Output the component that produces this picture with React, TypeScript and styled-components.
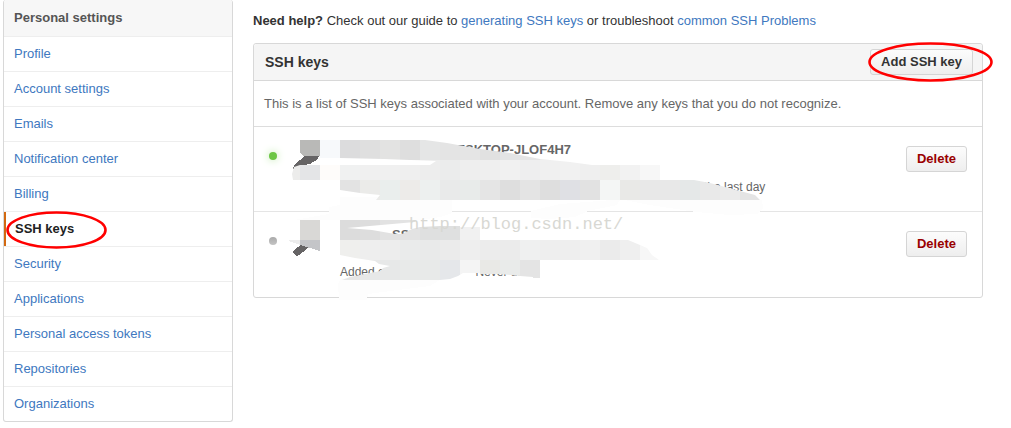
import React from "react";
import styled, { createGlobalStyle } from "styled-components";

const GlobalStyle = createGlobalStyle`
  *, *::before, *::after { box-sizing: border-box; }
  body {
    margin: 0;
    background: #fff;
    color: #333;
    font: 13px/20px "Liberation Sans", Arial, sans-serif;
  }
  a { color: #4078c0; text-decoration: none; }
`;

const Page = styled.div`
  display: flex;
  align-items: flex-start;
  gap: 20px;
  padding: 0 28px 6px 3px;
`;

const Sidebar = styled.nav`
  flex: 0 0 230px;
  border: 1px solid #d8d8d8;
  border-top: 0;
  border-radius: 3px;
`;

const SidebarTitle = styled.h2`
  margin: 0;
  padding: 8px 10px;
  font-size: 13px;
  line-height: 20px;
  color: #555;
  background: #f7f7f7;
  border-bottom: 1px solid #eee;
  border-radius: 3px 3px 0 0;
`;

const NavItem = styled.a<{ $active?: boolean }>`
  position: relative;
  display: block;
  padding: 7px 10px;
  border-bottom: 1px solid #eee;
  &:last-child { border-bottom: 0; }
  ${(p) =>
    p.$active &&
    `
    color: #222;
    font-weight: bold;
    padding-left: 11px;
    box-shadow: inset 2px 0 0 #d26911;
  `}
`;

const Main = styled.main`
  flex: 1;
  min-width: 0;
`;

const Help = styled.p`
  margin: 11px 0 12px;
`;

const Panel = styled.section`
  position: relative;
  border: 1px solid #d8d8d8;
  border-radius: 3px;
`;

const PanelHeader = styled.header`
  display: flex;
  align-items: center;
  justify-content: space-between;
  padding: 5px 9px 5px 11px;
  background: #f5f5f5;
  border-bottom: 1px solid #d8d8d8;
  border-radius: 3px 3px 0 0;
`;

const PanelTitle = styled.h3`
  margin: 0;
  font-size: 14px;
  line-height: 20px;
`;

const Description = styled.p`
  margin: 0;
  padding: 13px 10px 12px;
  color: #666;
  border-bottom: 1px solid #ddd;
`;

const Button = styled.button<{ $danger?: boolean }>`
  height: 26px;
  padding: 0 10px;
  font: bold 13px/20px "Liberation Sans", Arial, sans-serif;
  color: ${(p) => (p.$danger ? "#900" : "#333")};
  background: linear-gradient(#fcfcfc, #eee);
  border: 1px solid #d5d5d5;
  border-radius: 3px;
`;

const ButtonMark = styled.div`
  position: relative;
  display: flex;
`;

const KeyList = styled.ul`
  margin: 0;
  padding: 0;
  list-style: none;
`;

const KeyRow = styled.li`
  display: flex;
  align-items: flex-start;
  min-height: 85px;
  padding: 0 15px;
  border-bottom: 1px solid #e5e5e5;
  &:last-child { border-bottom: 0; }
  ${Button} { margin-top: 19px; }
`;

const Status = styled.span<{ $on?: boolean }>`
  width: 8px;
  height: 8px;
  margin: 25px 63px 0 0;
  border-radius: 50%;
  background: ${(p) => (p.$on ? "#6cc644" : "linear-gradient(#aaa, #c4c4c4)")};
  box-shadow: ${(p) => (p.$on ? "0 0 8px #b8e6a4" : "none")};
`;

const KeyText = styled.div`
  flex: 1;
  display: flex;
  flex-direction: column;
  gap: 17px;
  padding-top: 13px;
  color: #666;
`;

const KeyName = styled.strong<{ $indent: number }>`
  padding-left: ${(p) => p.$indent}px;
`;

const KeyMeta = styled.span<{ $indent: number; $gap: number }>`
  display: flex;
  gap: ${(p) => p.$gap}px;
  padding-left: ${(p) => p.$indent}px;
  font-size: 12px;
`;

const Smudges = styled.svg`
  position: absolute;
  top: 0;
  left: 0;
  pointer-events: none;
`;

const Watermark = styled.span`
  position: absolute;
  top: 171px;
  left: 155px;
  font: 17px/20px "Liberation Mono", monospace;
  color: #d8d8d3;
  pointer-events: none;
`;

const Ring = styled.svg<{ $top: number; $left: number }>`
  position: absolute;
  z-index: 1;
  top: ${(p) => p.$top}px;
  left: ${(p) => p.$left}px;
  pointer-events: none;
`;

function RedRing({ w, h, top, left }: { w: number; h: number; top: number; left: number }) {
  return (
    <Ring $top={top} $left={left} width={w} height={h} aria-hidden="true">
      <ellipse cx={w / 2} cy={h / 2} rx={w / 2 - 1.5} ry={h / 2 - 1.5} fill="none" stroke="#f00" strokeWidth="2.6" />
    </Ring>
  );
}

const links = [
  "Profile", "Account settings", "Emails", "Notification center", "Billing", "SSH keys",
  "Security", "Applications", "Personal access tokens", "Repositories", "Organizations",
];

type Band = { x: number; y: number; h: number; colors: string[] };

const firstBands: Band[] = [
  { x: 340, y: 140, h: 20, colors: ["#dcdcdd", "#dfdfdf", "#e3e3e2", "#dedede", "#e5e6e6", "#e4e4e4", "#e5e5e5", "#e1e1e1", "#e3e4e5", "#e5e5e5", "#ebebeb", "#eeeeee", "#eeeeee"] },
  { x: 280, y: 160, h: 20, colors: ["#ececeb", "#e4e5e7", "#fefcfa", "#f0f1f1", "#f0f0f0", "#f0f0f0", "#efefef", "#ededed", "#ebecec", "#eeeeee", "#efefef", "#f1f1f1", "#eeeeef", "#f0f0f0", "#f1f1f1", "#efefef", "#eeeeec", "#f2f2f2", "#f7f7f7"] },
  { x: 340, y: 180, h: 20, colors: ["#e3e3e3", "#ebebe9", "#eaeeed", "#edebe9", "#edf0ef", "#e9eaea", "#e8ebea", "#e5e5e5", "#dedede", "#e4e4e4", "#dedede", "#dfe0e4", "#e2e2e2", "#f4f6f5", "#e9e9e7", "#e8e8e8", "#e8e8e8", "#e5e8e8", "#e9e9e9", "#ebebeb", "#e4e4e4", "#e6e6e6"] },
];

const secondBands: Band[] = [
  { x: 340, y: 220, h: 20, colors: ["#dcdcdc", "#dddddd", "#e2e2e2", "#e3e3e3", "#dfe0e0", "#dfe0e0", "#f3f3f3", "#f3f3f3"] },
  { x: 340, y: 240, h: 20, colors: ["#efefed", "#eeeeee", "#ededed", "#eaebeb", "#e9eaea", "#ebebeb", "#eeeeee", "#ececec", "#ebebeb", "#eff0f0", "#eeeeee", "#eeeeee", "#f0f0f0", "#ebebeb", "#efefef", "#f7f7f7"] },
  { x: 340, y: 260, h: 20, colors: ["#e6e6e6", "#e7e8e8", "#e7e8e8", "#e8eae9", "#e8eae9", "#e5e7ea", "#f4f4f4", "#e9e9e6", "#e9ebea", "#e4e4e4"] },
];

function Bands({ bands }: { bands: Band[] }) {
  return (
    <>
      {bands.map((b) =>
        b.colors.map((c, i) => (
          <rect key={`${b.x}-${b.y}-${i}`} x={b.x + i * 20} y={b.y} width="20" height={b.h} fill={c} />
        ))
      )}
    </>
  );
}

function Redactions() {
  return (
    <Smudges width="560" height="260" viewBox="254 44 560 260" shapeRendering="crispEdges" aria-hidden="true">
      <defs>
        <clipPath id="first">
          <path d="M340 140H425L447 143L480 149L510 153L540 159L570 162L592 165H660V180H694L710 183L740 191L755 195L760 200H376L380 195L360 193L340 190V180H293L292 174L294 167L300 165H430L436 161L384 159L340 158Z" />
        </clipPath>
        <clipPath id="second">
          <path d="M340 220H415V222L347 228L372 230L395 234H402L412 229L420 227L440 226H460V240H628L640 245L647 248L652 255L659 260H540V278H533V277L520 276L500 274H480V273H463L458 276L450 279L440 280H342L350 277L365 274L380 271L383 268L390 266L379 264L375 261L355 258L340 255Z" />
        </clipPath>
      </defs>
      <path fill="#fdfdfd" d="M340 197H452V213L440 217L420 220H294L329 214V207L340 205Z" />
      <path fill="#fdfdfd" d="M531 211L560 204L612 200H620L617 205L588 211L575 217L550 219L531 218Z" />
      <path fill="#fdfdfd" d="M624 200H762L763 208L757 214L730 215L696 212L650 205Z" />
      <path fill="#fdfdfd" d="M338 284L341 278L440 280L430 286L398 290L368 294L367 300H339Z" />
      <path fill="#b9b9b7" d="M300 140H320V156H304L300 153Z" />
      <path fill="#f7f9fb" d="M320 140H340V158H320Z" />
      <path fill="#666465" d="M305 156H319L318 159L310 164L303 165L296 169H293L294 165Z" />
      <g clipPath="url(#first)"><Bands bands={firstBands} /></g>
      <path d="M297 252L304 247" stroke="#666465" strokeWidth="7" strokeLinecap="round" />
      <path fill="#d9d8d6" d="M300 220H320V240H300Z" />
      <path fill="#ededed" d="M289 240H300V245L289 241Z" />
      <path fill="#c4c5c8" d="M300 240H320V251L300 245Z" />
      <path fill="#e3e3e3" d="M460 227H480V240H460Z" opacity="0.5" />
      <g clipPath="url(#second)"><Bands bands={secondBands} /></g>
    </Smudges>
  );
}

export default function App() {
  return (
    <>
      <GlobalStyle />
      <Page>
        <Sidebar aria-label="Personal settings">
          <SidebarTitle>Personal settings</SidebarTitle>
          {links.map((label) => {
            const active = label === "SSH keys";
            return (
              <NavItem key={label} href="#" $active={active} aria-current={active ? "page" : undefined}>
                {label}
                {active && <RedRing w={101} h={38} top={-1} left={2} />}
              </NavItem>
            );
          })}
        </Sidebar>
        <Main>
          <Help>
            <strong>Need help?</strong> Check out our guide to <a href="#">generating SSH keys</a> or troubleshoot{" "}
            <a href="#">common SSH Problems</a>
          </Help>
          <Panel>
            <PanelHeader>
              <PanelTitle>SSH keys</PanelTitle>
              <ButtonMark>
                <Button type="button">Add SSH key</Button>
                <RedRing w={125} h={40} top={-7} left={-2} />
              </ButtonMark>
            </PanelHeader>
            <Description>
              This is a list of SSH keys associated with your account. Remove any keys that you do not recognize.
            </Description>
            <KeyList>
              <KeyRow>
                <Status $on />
                <KeyText>
                  <KeyName $indent={107}>DESKTOP-JLOF4H7</KeyName>
                  <KeyMeta $indent={364} $gap={0}>the last day</KeyMeta>
                </KeyText>
                <Button type="button" $danger>Delete</Button>
              </KeyRow>
              <KeyRow>
                <Status />
                <KeyText>
                  <KeyName $indent={52}>SSH</KeyName>
                  <KeyMeta $indent={0} $gap={84}>
                    <span>Added on</span>
                    <span>Never used</span>
                  </KeyMeta>
                </KeyText>
                <Button type="button" $danger>Delete</Button>
              </KeyRow>
            </KeyList>
            <Redactions />
            <Watermark>http://blog.csdn.net/</Watermark>
          </Panel>
        </Main>
      </Page>
    </>
  );
}
